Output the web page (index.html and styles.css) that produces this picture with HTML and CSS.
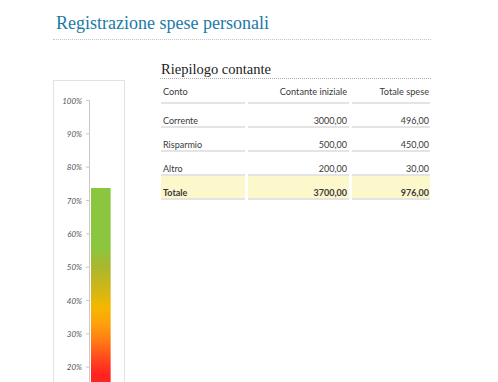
FILE: index.html
```html
<!DOCTYPE html>
<html lang="it">
<head>
<meta charset="utf-8">
<title>Registrazione spese personali</title>
<link rel="stylesheet" href="styles.css">
</head>
<body>
<header class="header">
  <h1 class="title">Registrazione spese personali</h1>
</header>
<main class="main">
  <section class="chart">
    <svg class="chart-svg" width="70" height="330" viewBox="0 0 70 330" xmlns="http://www.w3.org/2000/svg">
      <defs>
        <linearGradient id="barGrad" gradientUnits="userSpaceOnUse" x1="0" y1="19.5" x2="0" y2="352.8">
          <stop offset="0" stop-color="#8cc63f"/>
          <stop offset="0.44" stop-color="#8cc63f"/>
          <stop offset="0.50" stop-color="#a9b72f"/>
          <stop offset="0.57" stop-color="#d4b614"/>
          <stop offset="0.62" stop-color="#f4b800"/>
          <stop offset="0.67" stop-color="#ffa00c"/>
          <stop offset="0.72" stop-color="#ff7c14"/>
          <stop offset="0.77" stop-color="#ff4c1e"/>
          <stop offset="0.82" stop-color="#ff2420"/>
          <stop offset="1" stop-color="#ff1a1a"/>
        </linearGradient>
      </defs>
      <g class="axis">
        <line x1="35.5" y1="19.5" x2="35.5" y2="330"/>
        <line x1="32" y1="19.5" x2="35.5" y2="19.5"/>
        <line x1="32" y1="52.8" x2="35.5" y2="52.8"/>
        <line x1="32" y1="86.2" x2="35.5" y2="86.2"/>
        <line x1="32" y1="119.5" x2="35.5" y2="119.5"/>
        <line x1="32" y1="152.8" x2="35.5" y2="152.8"/>
        <line x1="32" y1="186.2" x2="35.5" y2="186.2"/>
        <line x1="32" y1="219.5" x2="35.5" y2="219.5"/>
        <line x1="32" y1="252.8" x2="35.5" y2="252.8"/>
        <line x1="32" y1="286.2" x2="35.5" y2="286.2"/>
      </g>
      <g class="labels">
        <text x="28" y="22.5">100%</text>
        <text x="28" y="55.8">90%</text>
        <text x="28" y="89.2">80%</text>
        <text x="28" y="122.5">70%</text>
        <text x="28" y="155.8">60%</text>
        <text x="28" y="189.2">50%</text>
        <text x="28" y="222.5">40%</text>
        <text x="28" y="255.8">30%</text>
        <text x="28" y="289.2">20%</text>
      </g>
      <rect x="37" y="107" width="20" height="223" fill="url(#barGrad)"/>
      <rect class="bar-edge" x="56" y="107" width="1" height="223"/>
    </svg>
  </section>
  <section class="summary">
    <h2 class="subtitle">Riepilogo contante</h2>
    <table class="table">
      <thead>
        <tr>
          <th class="c1">Conto</th>
          <th class="c2 num">Contante iniziale</th>
          <th class="c3 num">Totale spese</th>
        </tr>
      </thead>
      <tbody>
        <tr>
          <td>Corrente</td>
          <td class="num">3000,00</td>
          <td class="num">496,00</td>
        </tr>
        <tr>
          <td>Risparmio</td>
          <td class="num">500,00</td>
          <td class="num">450,00</td>
        </tr>
        <tr>
          <td>Altro</td>
          <td class="num">200,00</td>
          <td class="num">30,00</td>
        </tr>
        <tr class="total">
          <td>Totale</td>
          <td class="num">3700,00</td>
          <td class="num">976,00</td>
        </tr>
      </tbody>
    </table>
  </section>
</main>
</body>
</html>
```

FILE: styles.css
```css
html, body {
  margin: 0;
  padding: 0;
  background: #ffffff;
}

body {
  font-family: "Lato", "Open Sans", sans-serif;
  color: #333333;
  width: 498px;
  height: 382px;
  overflow: hidden;
}

.header {
  margin-left: 53px;
  width: 378px;
  border-bottom: 1px dotted #c4c4c4;
  padding: 11px 0 4px 3px;
  box-sizing: border-box;
}

.title {
  margin: 0;
  font-family: "Liberation Serif", "Times New Roman", serif;
  font-weight: normal;
  font-size: 18px;
  line-height: 24px;
  color: #1b7ba6;
}

.main {
  display: flex;
  align-items: flex-start;
  margin-left: 53px;
}

.chart {
  margin-top: 40px;
  width: 70px;
  height: 330px;
  border: 1px solid #e2e2e2;
}

.chart-svg {
  display: block;
}

.axis line {
  stroke: #c9c9c9;
  stroke-width: 1;
}

.labels text {
  font-family: "Lato", "Open Sans", sans-serif;
  font-style: italic;
  font-size: 8px;
  fill: #555555;
  text-anchor: end;
}

.bar-edge {
  fill: #ffffff;
  opacity: 0.35;
}

.summary {
  margin-top: 20px;
  margin-left: 35px;
  width: 271px;
}

.subtitle {
  margin: 0;
  font-family: "Liberation Serif", "Times New Roman", serif;
  font-weight: normal;
  font-size: 14.5px;
  line-height: 18px;
  color: #222222;
  padding-left: 1px;
  border-bottom: 1px dotted #b0b0b0;
}

.table {
  margin-left: -2px;
  border-collapse: separate;
  border-spacing: 3px 0;
  table-layout: fixed;
  width: 275px;
  font-size: 9px;
  color: #3a3a3a;
}

.table th,
.table td {
  box-sizing: border-box;
  text-align: left;
  font-weight: normal;
  border-bottom: 2px solid #e4e4e4;
  white-space: nowrap;
}

.table th {
  font-size: 9.2px;
  line-height: 12px;
  padding: 7px 2px 4px;
  vertical-align: top;
}

.table td {
  line-height: 9px;
  padding: 12px 2px 1px;
  vertical-align: bottom;
}

.table .c1 { width: 84px; }
.table .c2 { width: 101px; }
.table .c3 { width: 78px; }

.table .num {
  text-align: right;
}

.table .num:last-child {
  padding-right: 1px;
}

.total td {
  background: #fdf7cc;
  font-weight: bold;
}
```
